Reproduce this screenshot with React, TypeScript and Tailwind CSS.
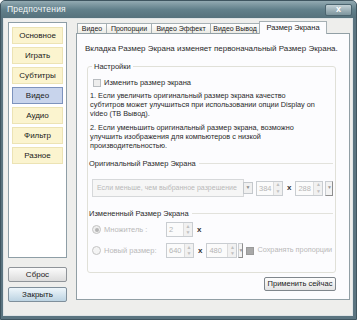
import React from "react"

const font = { fontFamily: '"Liberation Sans", Arial, sans-serif' }

const navItems = ["Основное", "Играть", "Субтитры", "Видео", "Аудио", "Фильтр", "Разное"]

const tabs = [
  { label: "Видео", w: "w-[30px]" },
  { label: "Пропорции", w: "w-[46px]" },
  { label: "Видео Эффект", w: "w-[60px]" },
  { label: "Видео Вывод", w: "w-[50px]" },
]

function Spinner({ value, w = "w-[27px]" }: { value: string; w?: string }) {
  return (
    <div className={`${w} h-[15px] flex border border-[#c9cdd1] bg-[#fbfbfb]`}>
      <span className="flex-1 pl-[2px] text-[7.5px] leading-[13px] text-[#b5b5b5]">{value}</span>
      <div className="w-[9px] flex flex-col border-l border-[#dcdcdc] bg-[#f1f1f1]">
        <span className="flex-1 flex items-center justify-center text-[5px] leading-none text-[#c0c0c0]">▲</span>
        <span className="flex-1 flex items-center justify-center text-[5px] leading-none text-[#c0c0c0]">▼</span>
      </div>
    </div>
  )
}

function MiniDrop({ w = "w-[8px]" }: { w?: string }) {
  return (
    <div className={`${w} h-[15px] flex items-center justify-center border border-[#c9cdd1] border-r-[#8e8e8e] border-b-[#8e8e8e] bg-[#f3f3f3] text-[5px] text-[#9a9a9a] overflow-hidden`}>
      ▼
    </div>
  )
}

function Section({ title }: { title: string }) {
  return (
    <div className="flex items-center gap-[3px] text-[7.5px] leading-[9px] text-[#2a2a2a]">
      <span>{title}</span>
      <div className="flex-1 h-px bg-[#e2e2dc]" />
    </div>
  )
}

export default function App() {
  return (
    <div className="w-[357px] h-[320px] bg-white" style={font}>
      <div className="w-full h-full flex flex-col bg-[#5b7480] border border-[#3f5560] rounded-t-[5px] overflow-hidden">
        {/* title bar */}
        <div className="h-[17px] flex items-center justify-between pl-[6px] pr-[4px] bg-gradient-to-b from-[#93aab2] via-[#62808b] to-[#56727d]">
          <span className="text-[8.5px] text-[#f4f7f8] tracking-[0.2px]">Предпочтения</span>
          <div className="w-[27px] h-[12px] rounded-[2px] border border-[#4c6570] bg-gradient-to-b from-[#c3d1d6] to-[#7d959e] flex items-center justify-center text-[9px] font-bold leading-none text-white">
            x
          </div>
        </div>

        {/* body */}
        <div className="flex-1 flex ml-[2px] mr-[3px] mb-[3px] pl-[4px] pr-[2px] bg-[#eeeeec] border border-[#dfe4e6]">
          {/* left column */}
          <div className="w-[60px] flex flex-col pt-[3px]">
            <div className="h-[236px] flex flex-col gap-[3px] pt-[4px] px-[3px] bg-white border border-[#8e9ea6]">
              {navItems.map((item) => (
                <div
                  key={item}
                  className={
                    item === "Видео"
                      ? "h-[17px] flex items-center justify-center text-[8px] text-[#1a1a1a] bg-[#c8d4ec] border border-[#7d93bd]"
                      : "h-[17px] flex items-center justify-center text-[8px] text-[#1a1a1a] bg-[#fbf4cf] border border-[#ece3b4]"
                  }
                >
                  {item}
                </div>
              ))}
            </div>
            <div className="mt-[9px] h-[15px] flex items-center justify-center text-[8px] text-[#1a1a1a] border border-[#8f9499] rounded-[2px] bg-gradient-to-b from-[#fbfbfb] to-[#dcdcdc]">
              Сброс
            </div>
            <div className="mt-[5px] h-[15px] flex items-center justify-center text-[8px] text-[#1a1a1a] border border-[#7f8f9b] rounded-[2px] bg-gradient-to-b from-[#eef6fb] to-[#bcd3e2]">
              Закрыть
            </div>
          </div>

          {/* right column */}
          <div className="ml-[9px] w-[274px] flex flex-col pt-[2px]">
            <div className="h-[12px] flex items-end pl-[1px] relative z-10">
              {tabs.map((t) => (
                <div
                  key={t.label}
                  className={`${t.w} h-[10px] flex items-center justify-center text-[7px] leading-none text-[#1a1a1a] bg-gradient-to-b from-[#fefefe] to-[#ecebe5] border border-b-0 border-[#a6b0b4] -mr-px whitespace-nowrap`}
                >
                  {t.label}
                </div>
              ))}
              <div className="w-[68px] h-[13px] -mb-px flex items-center justify-center text-[7.5px] leading-none text-[#1a1a1a] bg-[#fcfcfe] border border-b-0 border-[#a6b0b4] whitespace-nowrap">
                Размер Экрана
              </div>
            </div>
            <div className="h-[267px] flex flex-col bg-[#fcfcfe] border border-[#919fa5] pl-[8px] pr-[13px] pt-[10px]">
              <p className="text-[8px] leading-[9px] text-[#2a2a2a] whitespace-nowrap">
                Вкладка Размер Экрана изменяет первоначальный Размер Экрана.
              </p>

              <fieldset className="mt-[9px] ml-[2px] h-[211px] flex flex-col border border-[#e0e0d8] rounded-[3px] px-[2px]">
                <legend className="ml-[2px] px-[2px] text-[7.5px] leading-[9px] text-[#2a2a2a]">Настройки</legend>

                <div className="mt-[7px] ml-[3px] flex items-center gap-[3px]">
                  <div className="w-[8px] h-[8px] border border-[#b8bcc0] bg-[#ededed]" />
                  <span className="text-[7.5px] leading-[9px] text-[#2a2a2a]">Изменить размер экрана</span>
                </div>

                <p className="mt-[4px] text-[7.3px] leading-[9px] text-[#2a2a2a] whitespace-nowrap">
                  1. Если увеличить оригинальный размер экрана качество
                  <br />
                  субтитров может улучшиться при использовании опции Display on
                  <br />
                  video (ТВ Вывод).
                </p>
                <p className="mt-[5px] text-[7.3px] leading-[9px] text-[#2a2a2a] whitespace-nowrap">
                  2. Если уменьшить оригинальный размер экрана, возможно
                  <br />
                  улучшить изображения для компьютеров с низкой
                  <br />
                  производительностью.
                </p>

                <div className="mt-[9px] -ml-px">
                  <Section title="Оригинальный Размер Экрана" />
                </div>

                <div className="mt-[11px] ml-[2px] flex items-center">
                  <div className="w-[152px] h-[18px] flex items-center pl-[4px] border border-[#d6d8da] bg-[#f6f6f6] text-[7px] text-[#b9b9b9] whitespace-nowrap overflow-hidden">
                    Если меньше, чем выбранное разрешение
                  </div>
                  <div className="ml-[-1px] w-[10px] h-[12px] flex items-center justify-center border border-[#c4c8cc] bg-[#f0f0f0] text-[5px] text-[#8a8a8a]">
                    ▼
                  </div>
                  <div className="ml-[3px]">
                    <Spinner value="384" />
                  </div>
                  <span className="mx-[4px] text-[8px] font-bold text-[#333]">x</span>
                  <Spinner value="288" w="w-[28px]" />
                  <div className="ml-[2px]">
                    <MiniDrop />
                  </div>
                </div>

                <div className="mt-[12px] -ml-px">
                  <Section title="Измененный Размер Экрана" />
                </div>

                <div className="mt-[4px] ml-[2px] flex items-center">
                  <div className="w-[9px] h-[9px] rounded-full border border-[#c4c4c4] bg-[#eeeeee] flex items-center justify-center">
                    <div className="w-[4px] h-[4px] rounded-full bg-[#b5b5b5]" />
                  </div>
                  <span className="ml-[3px] w-[62px] text-[7.5px] text-[#b9b9b9]">Множитель :</span>
                  <Spinner value="2" />
                  <span className="ml-[4px] text-[8px] font-bold text-[#333]">x</span>
                </div>

                <div className="mt-[6px] ml-[2px] flex items-center">
                  <div className="w-[9px] h-[9px] rounded-full border border-[#c4c4c4] bg-[#f4f4f4]" />
                  <span className="ml-[3px] w-[62px] text-[7.5px] text-[#b9b9b9]">Новый размер:</span>
                  <Spinner value="640" w="w-[28px]" />
                  <span className="mx-[4px] text-[8px] font-bold text-[#333]">x</span>
                  <Spinner value="480" w="w-[31px]" />
                  <div className="ml-[1px]">
                    <MiniDrop w="w-[5px]" />
                  </div>
                  <div className="ml-[3px] w-[8px] h-[8px] bg-[#a9a9a9] border border-[#9a9a9a]" />
                  <span className="ml-[3px] text-[7.3px] text-[#b9b9b9] whitespace-nowrap">Сохранять пропорции</span>
                </div>
              </fieldset>

              <div className="mt-[4px] flex justify-end">
                <div className="w-[72px] h-[14px] flex items-center justify-center border border-[#7f868c] rounded-[2px] bg-gradient-to-b from-[#fdfdfd] to-[#e3e3e3] text-[7.5px] text-[#1a1a1a] whitespace-nowrap">
                  Применить сейчас
                </div>
              </div>
            </div>
          </div>
        </div>
      </div>
    </div>
  )
}
